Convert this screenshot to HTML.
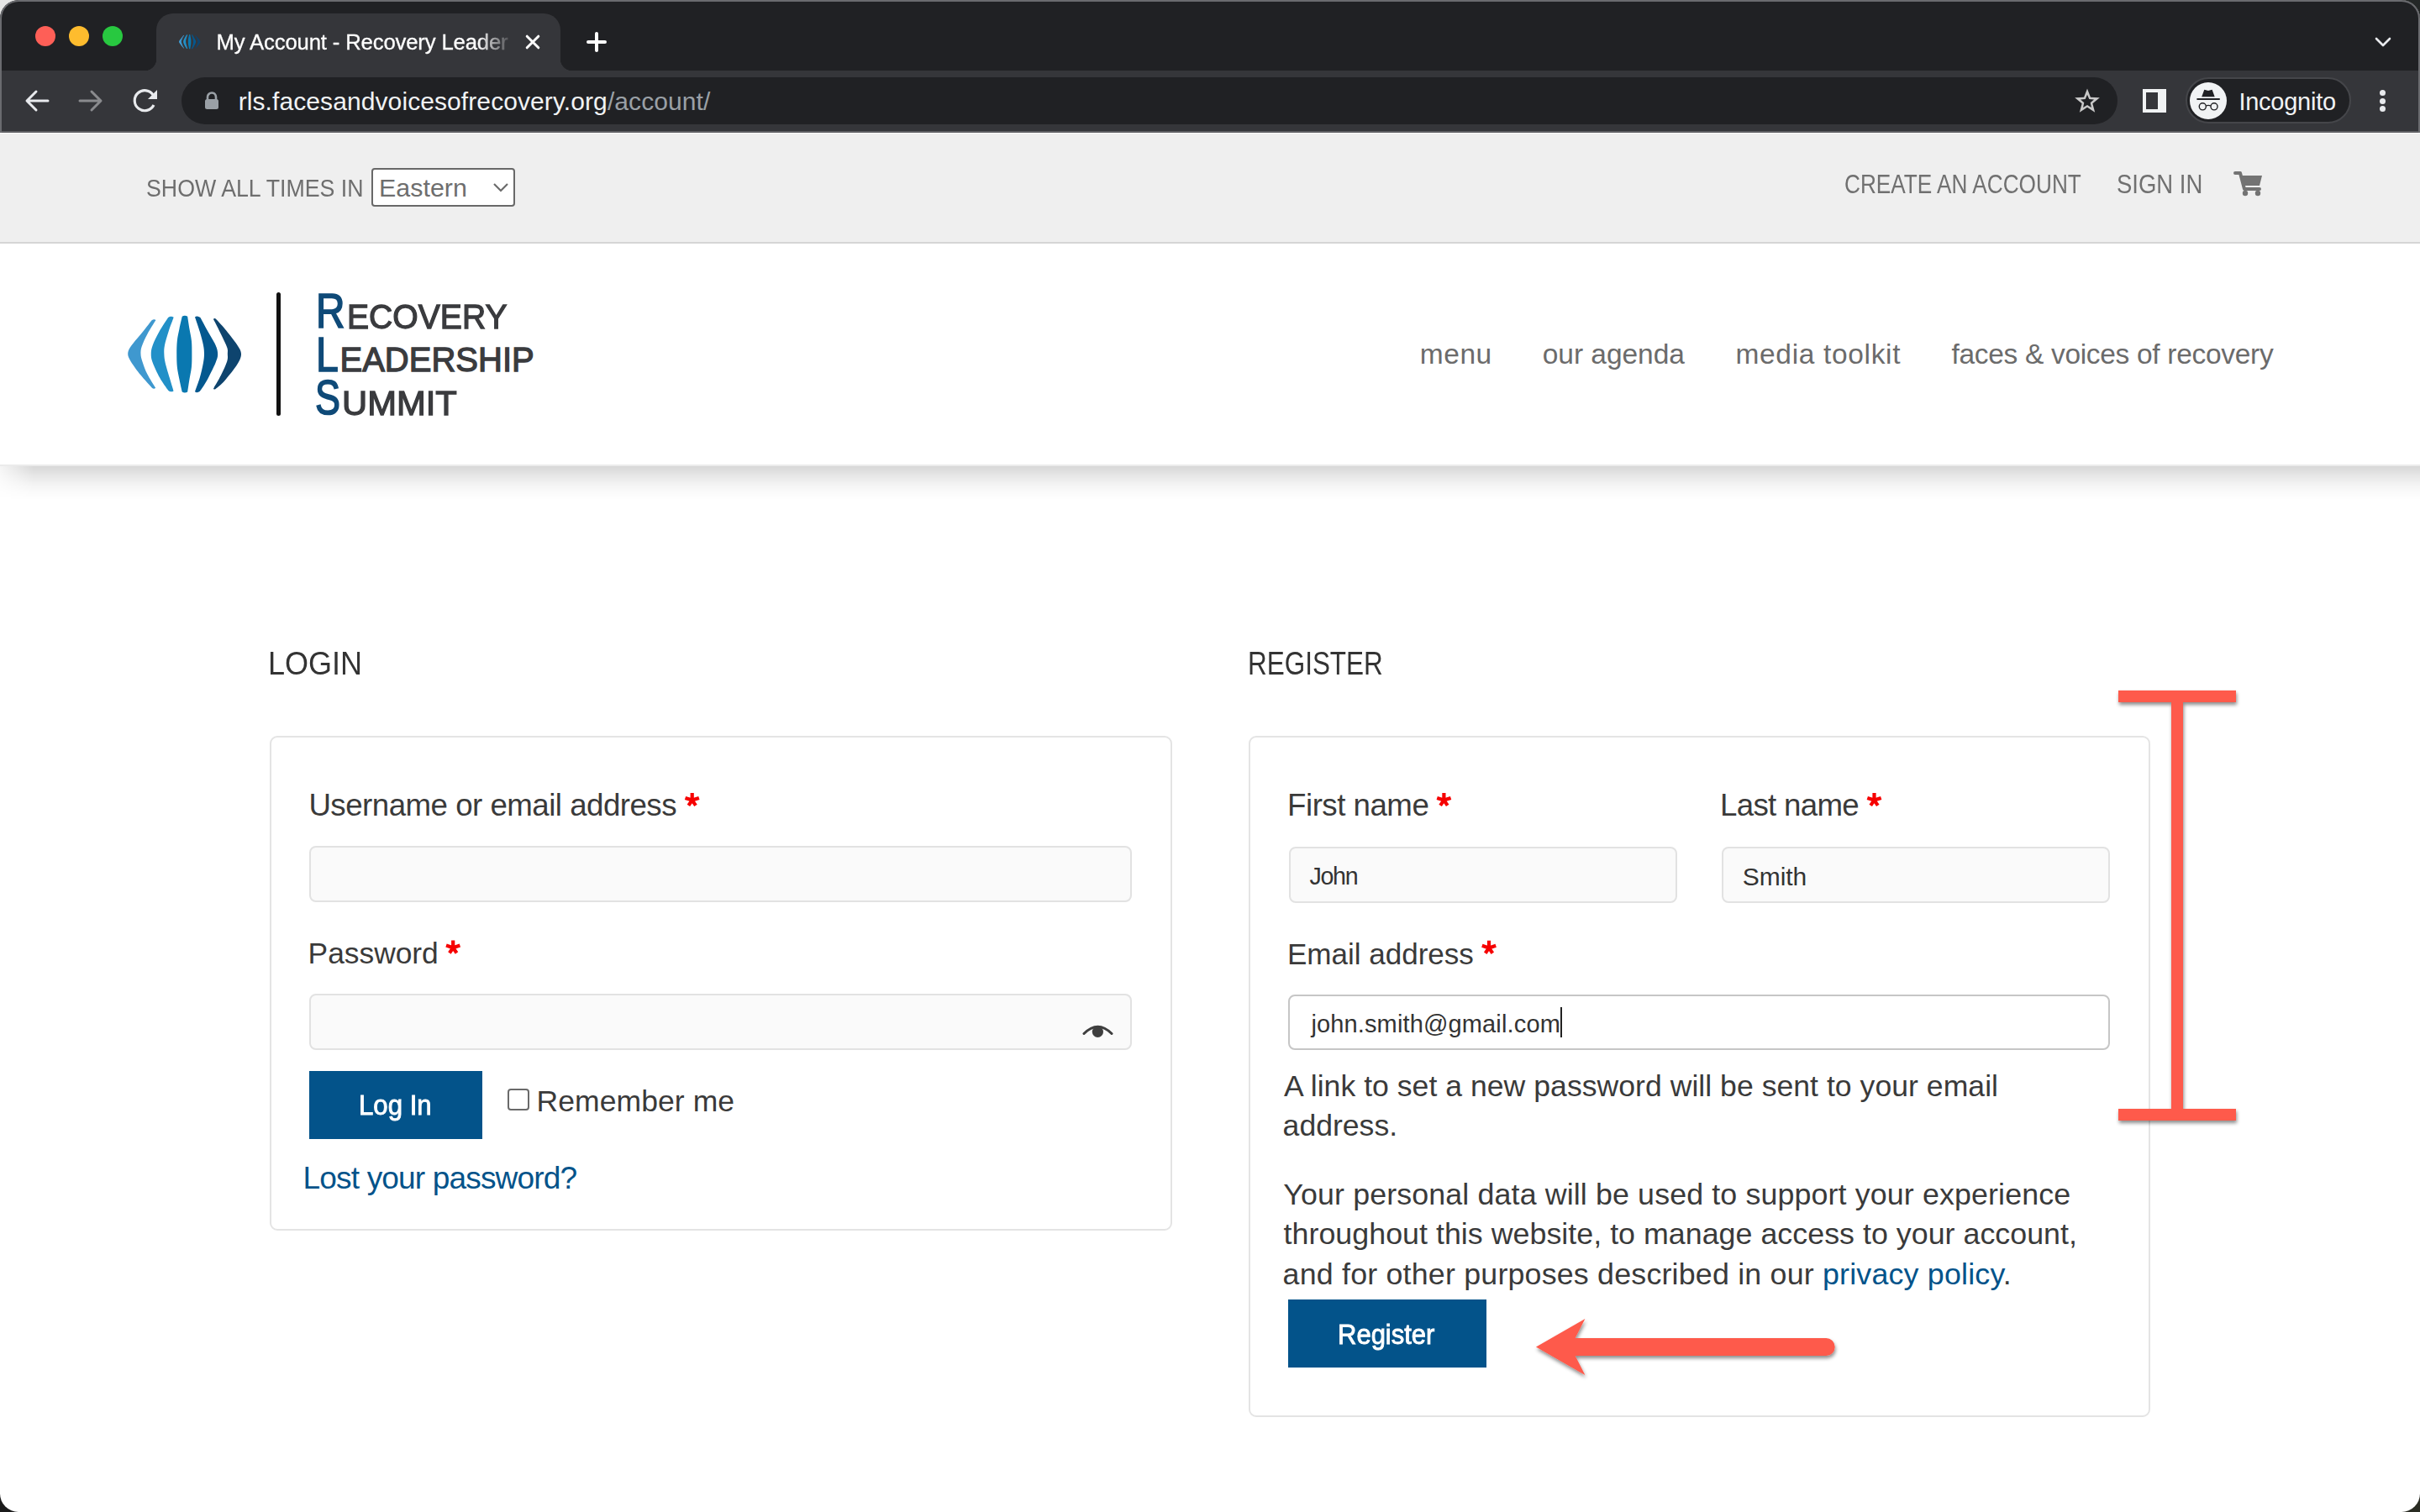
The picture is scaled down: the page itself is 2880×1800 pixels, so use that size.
<!DOCTYPE html>
<html><head><meta charset="utf-8"><title>My Account - Recovery Leadership Summit</title>
<style>
*{box-sizing:border-box;margin:0;padding:0}
html,body{width:2880px;height:1800px;overflow:hidden;background:#202124}
body{position:relative;font-family:"Liberation Sans",sans-serif}
.a{position:absolute}
.t{position:absolute;white-space:nowrap;line-height:1;font-family:"Liberation Sans",sans-serif}
#win{position:absolute;left:0;top:0;width:2880px;height:1800px;border-radius:22px;overflow:hidden;background:#fff}
</style></head>
<body>
<!-- outside corners -->
<div class="a" style="left:0;top:0;width:40px;height:40px;background:#e6e6e6"></div>
<div class="a" style="right:0;top:0;width:40px;height:40px;background:#242727"></div>
<div class="a" style="left:0;bottom:0;width:40px;height:40px;background:#1b1b1b"></div>
<div class="a" style="right:0;bottom:0;width:40px;height:40px;background:#2a2c23"></div>

<div id="win">
  <!-- ===== browser chrome ===== -->
  <div class="a" style="left:0;top:0;width:2880px;height:84px;background:#202124"></div>
  <div class="a" style="left:0;top:84px;width:2880px;height:72px;background:#35363a"></div>
  <div class="a" style="left:0;top:156px;width:2880px;height:2px;background:#5e5f63"></div>
  <div class="a" style="left:0;top:158px;width:2880px;height:1px;background:#fafafa"></div>
  <!-- window border -->
  <div class="a" style="left:0;top:0;width:2880px;height:158px;border:2px solid #6a6b6f;border-bottom:none;border-radius:22px 22px 0 0;pointer-events:none;z-index:5"></div>

  <!-- traffic lights -->
  <div class="a" style="left:42px;top:31px;width:24px;height:24px;border-radius:50%;background:#fe5f57"></div>
  <div class="a" style="left:82px;top:31px;width:24px;height:24px;border-radius:50%;background:#febc2e"></div>
  <div class="a" style="left:122px;top:31px;width:24px;height:24px;border-radius:50%;background:#28c840"></div>

  <!-- tab -->
  <div class="a" style="left:186px;top:16px;width:481px;height:68px;background:#35363a;border-radius:20px 20px 0 0"></div>
  <div class="a" style="left:172px;top:70px;width:14px;height:14px;background:radial-gradient(circle at 0 0,#202124 14px,#35363a 14.5px)"></div>
  <div class="a" style="left:667px;top:70px;width:14px;height:14px;background:radial-gradient(circle at 100% 0,#202124 14px,#35363a 14.5px)"></div>
  <!-- favicon -->
  <svg class="a" style="left:213px;top:41px" width="26" height="18" viewBox="100 150 1900 1300">
    <path fill="#3f98cf" d="M490,222 C460,260 366,382 309,453 C252,524 183,596 148,649 C113,702 99,732 99,774 C99,816 113,841 148,899 C183,957 252,1051 309,1122 C366,1193 460,1292 490,1326 Q525,1358 552,1330 C529,1292 452,1176 416,1104 C380,1032 354,954 336,899 C318,844 310,816 309,774 C308,732 309,702 327,649 C345,596 378,524 416,453 C454,382 533,259 556,220 Q530,195 490,222Z"/>
    <path fill="#2290c8" d="M758,178 C734,216 654,332 612,408 C570,484 527,570 505,631 C483,692 478,726 478,774 C478,822 481,852 505,917 C529,982 579,1090 621,1166 C663,1242 735,1338 758,1372 Q800,1410 846,1380 C835,1344 804,1243 781,1166 C758,1089 725,982 710,917 C695,852 694,822 692,774 C690,726 689,692 701,631 C713,570 740,484 764,408 C788,332 834,215 848,176 Q805,145 758,178Z"/>
    <path fill="#0a78b0" d="M986,162 C978,196 954,298 941,364 C928,430 912,492 905,560 C898,628 897,702 897,774 C897,846 898,921 905,990 C912,1059 928,1122 941,1190 C954,1258 978,1361 986,1395 Q1030,1425 1075,1395 C1080,1361 1095,1258 1106,1190 C1117,1122 1133,1059 1140,990 C1147,921 1146,846 1146,774 C1146,702 1147,628 1140,560 C1133,492 1117,430 1106,364 C1095,298 1080,196 1075,162 Q1030,135 986,162Z"/>
    <path fill="#04588f" d="M1284,178 C1305,216 1367,332 1409,408 C1451,484 1507,569 1534,631 C1561,693 1569,730 1569,778 C1569,826 1564,844 1534,916 C1504,988 1434,1132 1391,1210 C1348,1288 1297,1356 1278,1385 Q1230,1420 1196,1392 C1209,1354 1252,1245 1275,1166 C1298,1087 1321,982 1333,916 C1345,850 1347,820 1347,773 C1347,726 1345,692 1333,631 C1321,570 1298,484 1275,408 C1252,332 1209,211 1196,172 Q1230,140 1284,178Z"/>
    <path fill="#0e446e" d="M1546,210 C1569,236 1628,294 1685,364 C1742,434 1846,562 1890,631 C1934,700 1952,726 1952,778 C1952,830 1934,871 1890,943 C1846,1015 1742,1144 1685,1210 C1628,1276 1569,1317 1546,1338 Q1515,1370 1498,1342 C1519,1305 1586,1195 1623,1121 C1660,1047 1703,956 1721,898 C1739,840 1730,812 1730,773 C1730,734 1739,720 1721,667 C1703,614 1660,530 1623,453 C1586,376 1519,247 1498,206 Q1515,180 1546,210Z"/>
  </svg>
  <div class="a" style="left:250px;top:26px;width:362px;height:50px;overflow:hidden;-webkit-mask-image:linear-gradient(90deg,#000 318px,transparent 362px)">
    <div class="t" style="left:7.5px;top:11.5px;font-size:25.7px;letter-spacing:-0.15px;color:#ffffff;-webkit-text-stroke:0.3px #fff">My Account - Recovery Leader</div>
  </div>
  <!-- tab close -->
  <svg class="a" style="left:624px;top:40px" width="20" height="20" viewBox="0 0 20 20"><path d="M3.2,3.2 L16.8,16.8 M16.8,3.2 L3.2,16.8" stroke="#ffffff" stroke-width="3" stroke-linecap="round"/></svg>
  <!-- new tab plus -->
  <svg class="a" style="left:696px;top:36px" width="28" height="28" viewBox="0 0 28 28"><path d="M14,4 V24 M4,14 H24" stroke="#ffffff" stroke-width="4" stroke-linecap="round"/></svg>
  <!-- tab strip chevron -->
  <svg class="a" style="left:2825px;top:42px" width="22" height="16" viewBox="0 0 22 16"><path d="M3,4 L11,12 L19,4" fill="none" stroke="#e8eaed" stroke-width="2.6" stroke-linecap="round" stroke-linejoin="round"/></svg>

  <!-- nav icons -->
  <svg class="a" style="left:28px;top:104px" width="32" height="32" viewBox="0 0 32 32"><path d="M29,16 H5 M15,5 L4,16 L15,27" fill="none" stroke="#e8eaed" stroke-width="3" stroke-linecap="round" stroke-linejoin="round"/></svg>
  <svg class="a" style="left:92px;top:104px" width="32" height="32" viewBox="0 0 32 32"><path d="M3,16 H27 M17,5 L28,16 L17,27" fill="none" stroke="#8a8b8e" stroke-width="3" stroke-linecap="round" stroke-linejoin="round"/></svg>
  <svg class="a" style="left:156px;top:104px" width="34" height="32" viewBox="0 0 34 32"><path d="M27,21 A12,12 0 1 1 26.5,9.5" fill="none" stroke="#e8eaed" stroke-width="3.2"/><path d="M31,3 V14 H20 Z" fill="#e8eaed"/></svg>

  <!-- omnibox -->
  <div class="a" style="left:216px;top:92px;width:2304px;height:56px;border-radius:28px;background:#202124"></div>
  <svg class="a" style="left:242px;top:108px" width="20" height="24" viewBox="0 0 20 24"><path d="M5,11 V7.5 A5,5 0 0 1 15,7.5 V11" fill="none" stroke="#9aa0a6" stroke-width="2.6"/><rect x="2" y="10" width="16" height="12" rx="2.5" fill="#9aa0a6"/></svg>
  <div class="t" style="left:283.7px;top:105.5px;font-size:30px;letter-spacing:0.09px;color:#f1f3f4">rls.facesandvoicesofrecovery.org<span style="color:#9aa0a6">/account/</span></div>
  <svg class="a" style="left:2467px;top:104px" width="34" height="32" viewBox="0 0 34 32"><path fill-rule="evenodd" fill="#c9c9c9" d="M17.00,1.50 L20.94,11.68 L31.84,12.28 L23.37,19.17 L26.17,29.72 L17.00,23.80 L7.83,29.72 L10.63,19.17 L2.16,12.28 L13.06,11.68Z M17.00,8.70 L19.29,13.94 L24.99,14.50 L20.71,18.31 L21.94,23.90 L17.00,21.00 L12.06,23.90 L13.29,18.31 L9.01,14.50 L14.71,13.94Z"/></svg>

  <!-- side panel icon -->
  <div class="a" style="left:2550px;top:106px;width:28px;height:28px;background:#f1f3f4"></div>
  <div class="a" style="left:2554px;top:110px;width:14px;height:20px;background:#35363a"></div>
  <!-- incognito pill -->
  <div class="a" style="left:2601px;top:92px;width:197px;height:55px;border-radius:28px;background:#202124;border:2px solid #45464a"></div>
  <div class="a" style="left:2606px;top:98px;width:44px;height:44px;border-radius:50%;background:#f1f3f4"></div>
  <svg class="a" style="left:2606px;top:98px" width="44" height="44" viewBox="0 0 44 44">
    <path d="M14.2,17.3 L17.3,8.8 L22,9.9 L26.6,8.8 L29.7,17.3 Z" fill="#202124"/>
    <rect x="8.3" y="19.1" width="27.6" height="1.8" rx="0.6" fill="#202124"/>
    <circle cx="15.3" cy="28.8" r="4.05" fill="none" stroke="#202124" stroke-width="1.4"/>
    <circle cx="29" cy="28.8" r="4.05" fill="none" stroke="#202124" stroke-width="1.4"/>
    <path d="M19.4,28 Q22.1,26.6 24.9,28" fill="none" stroke="#202124" stroke-width="1.2"/>
  </svg>
  <div class="t" style="left:2664.4px;top:107.4px;font-size:29px;letter-spacing:-0.25px;color:#f1f3f4">Incognito</div>
  <!-- menu dots -->
  <div class="a" style="left:2832px;top:107px;width:7px;height:7px;border-radius:50%;background:#e8eaed"></div>
  <div class="a" style="left:2832px;top:116.5px;width:7px;height:7px;border-radius:50%;background:#e8eaed"></div>
  <div class="a" style="left:2832px;top:126px;width:7px;height:7px;border-radius:50%;background:#e8eaed"></div>

  <!-- ===== page ===== -->
  <div class="a" style="left:0;top:159px;width:2880px;height:129px;background:#efefef"></div>
  <div class="a" style="left:0;top:288px;width:2880px;height:2px;background:#d5d5d5"></div>

  <div class="t" style="left:173.9px;top:208.1px;font-size:30.4px;transform:scaleX(0.880);transform-origin:0 0;color:#6e6e6e">SHOW ALL TIMES IN</div>
  <div class="a" style="left:442px;top:200px;width:171px;height:46px;border:2px solid #686868;border-radius:4px;background:#fff"></div>
  <div class="t" style="left:451.1px;top:208.1px;font-size:30.4px;color:#6e6e6e">Eastern</div>
  <svg class="a" style="left:585px;top:215px" width="22" height="16" viewBox="0 0 22 16"><path d="M3,4 L11,12 L19,4" fill="none" stroke="#6b6b6b" stroke-width="2.2"/></svg>

  <div class="t" style="left:2194.7px;top:203.5px;font-size:30.6px;transform:scaleX(0.856);transform-origin:0 0;color:#707070">CREATE AN ACCOUNT</div>
  <div class="t" style="left:2518.5px;top:203.5px;font-size:30.6px;transform:scaleX(0.898);transform-origin:0 0;color:#707070">SIGN IN</div>
  <svg class="a" style="left:2658px;top:202px" width="36" height="32" viewBox="0 0 36 32">
    <path d="M2,4 H8 L13,23 H31" fill="none" stroke="#737373" stroke-width="4" stroke-linecap="round" stroke-linejoin="round"/>
    <path d="M9,7 H34 L31,19 H12 Z" fill="#737373"/>
    <circle cx="14" cy="28" r="3.2" fill="#737373"/><circle cx="29" cy="28" r="3.2" fill="#737373"/>
  </svg>

  <!-- header -->
  <div class="a" style="left:0;top:553px;width:2880px;height:2px;background:#ebebeb"></div>
  <div class="a" style="left:0;top:555px;width:2880px;height:40px;background:linear-gradient(180deg,rgba(0,0,0,.155) 0%,rgba(0,0,0,.10) 25%,rgba(0,0,0,.045) 55%,rgba(0,0,0,.015) 80%,rgba(0,0,0,0) 100%);-webkit-mask-image:linear-gradient(90deg,rgba(0,0,0,.25) 0,#000 40px)"></div>

  <!-- logo -->
  <svg class="a" style="left:145px;top:365px" width="150" height="110" viewBox="0 0 2062 1512">
    <path fill="#3f98cf" d="M490,222 C460,260 366,382 309,453 C252,524 183,596 148,649 C113,702 99,732 99,774 C99,816 113,841 148,899 C183,957 252,1051 309,1122 C366,1193 460,1292 490,1326 Q525,1358 552,1330 C529,1292 452,1176 416,1104 C380,1032 354,954 336,899 C318,844 310,816 309,774 C308,732 309,702 327,649 C345,596 378,524 416,453 C454,382 533,259 556,220 Q530,195 490,222Z"/>
    <path fill="#2290c8" d="M758,178 C734,216 654,332 612,408 C570,484 527,570 505,631 C483,692 478,726 478,774 C478,822 481,852 505,917 C529,982 579,1090 621,1166 C663,1242 735,1338 758,1372 Q800,1410 846,1380 C835,1344 804,1243 781,1166 C758,1089 725,982 710,917 C695,852 694,822 692,774 C690,726 689,692 701,631 C713,570 740,484 764,408 C788,332 834,215 848,176 Q805,145 758,178Z"/>
    <path fill="#0a78b0" d="M986,162 C978,196 954,298 941,364 C928,430 912,492 905,560 C898,628 897,702 897,774 C897,846 898,921 905,990 C912,1059 928,1122 941,1190 C954,1258 978,1361 986,1395 Q1030,1425 1075,1395 C1080,1361 1095,1258 1106,1190 C1117,1122 1133,1059 1140,990 C1147,921 1146,846 1146,774 C1146,702 1147,628 1140,560 C1133,492 1117,430 1106,364 C1095,298 1080,196 1075,162 Q1030,135 986,162Z"/>
    <path fill="#04588f" d="M1284,178 C1305,216 1367,332 1409,408 C1451,484 1507,569 1534,631 C1561,693 1569,730 1569,778 C1569,826 1564,844 1534,916 C1504,988 1434,1132 1391,1210 C1348,1288 1297,1356 1278,1385 Q1230,1420 1196,1392 C1209,1354 1252,1245 1275,1166 C1298,1087 1321,982 1333,916 C1345,850 1347,820 1347,773 C1347,726 1345,692 1333,631 C1321,570 1298,484 1275,408 C1252,332 1209,211 1196,172 Q1230,140 1284,178Z"/>
    <path fill="#0e446e" d="M1546,210 C1569,236 1628,294 1685,364 C1742,434 1846,562 1890,631 C1934,700 1952,726 1952,778 C1952,830 1934,871 1890,943 C1846,1015 1742,1144 1685,1210 C1628,1276 1569,1317 1546,1338 Q1515,1370 1498,1342 C1519,1305 1586,1195 1623,1121 C1660,1047 1703,956 1721,898 C1739,840 1730,812 1730,773 C1730,734 1739,720 1721,667 C1703,614 1660,530 1623,453 C1586,376 1519,247 1498,206 Q1515,180 1546,210Z"/>
  </svg>
  <div class="a" style="left:328.5px;top:348px;width:5px;height:147px;border-radius:2.5px;background:#111"></div>
  <div class="t" style="left:375.6px;top:342.0px;font-size:57px;color:#0f4a78;transform:scaleX(0.838);transform-origin:0 0;-webkit-text-stroke:1.7px #0f4a78">R</div>
  <div class="t" style="left:413.2px;top:356.5px;font-size:40px;color:#3a3b3e;transform:scaleX(0.978);transform-origin:0 0;-webkit-text-stroke:1.3px #3a3b3e">ECOVERY</div>
  <div class="t" style="left:375.6px;top:393.5px;font-size:57px;color:#0f4a78;transform:scaleX(0.845);transform-origin:0 0;-webkit-text-stroke:1.7px #0f4a78">L</div>
  <div class="t" style="left:404.5px;top:408.0px;font-size:40px;color:#3a3b3e;-webkit-text-stroke:1.3px #3a3b3e">EADERSHIP</div>
  <div class="t" style="left:374.7px;top:444.4px;font-size:58px;color:#0f4a78;transform:scaleX(0.774);transform-origin:0 0;-webkit-text-stroke:1.7px #0f4a78">S</div>
  <div class="t" style="left:407.1px;top:459.5px;font-size:40px;color:#3a3b3e;transform:scaleX(1.043);transform-origin:0 0;-webkit-text-stroke:1.3px #3a3b3e">UMMIT</div>

  <!-- nav -->
  <div class="t" style="left:1689.7px;top:405.4px;font-size:33.5px;letter-spacing:0.58px;color:#6b6b6b">menu</div>
  <div class="t" style="left:1835.7px;top:405.4px;font-size:33.5px;letter-spacing:-0.03px;color:#6b6b6b">our agenda</div>
  <div class="t" style="left:2065.5px;top:405.4px;font-size:33.5px;letter-spacing:0.66px;color:#6b6b6b">media toolkit</div>
  <div class="t" style="left:2322.4px;top:405.4px;font-size:33.5px;letter-spacing:-0.31px;color:#6b6b6b">faces &amp; voices of recovery</div>

  <!-- cards -->
  <div class="a" style="left:321px;top:876px;width:1074px;height:589px;border:2px solid #e4e4e4;border-radius:9px"></div>
  <div class="a" style="left:1486px;top:876px;width:1073px;height:811px;border:2px solid #e4e4e4;border-radius:9px"></div>
  <!-- inputs -->
  <div class="a" style="left:368px;top:1007px;width:979px;height:67px;border:2px solid #e2e2e2;border-radius:8px;background:#fafafa"></div>
  <div class="a" style="left:368px;top:1183px;width:979px;height:67px;border:2px solid #e2e2e2;border-radius:8px;background:#fafafa"></div>
  <div class="a" style="left:1534px;top:1008px;width:462px;height:67px;border:2px solid #e2e2e2;border-radius:8px;background:#fafafa"></div>
  <div class="a" style="left:2049px;top:1008px;width:462px;height:67px;border:2px solid #e2e2e2;border-radius:8px;background:#fafafa"></div>
  <div class="a" style="left:1533px;top:1184px;width:978px;height:66px;border:2px solid #c6c6c6;border-radius:8px;background:#ffffff"></div>
  <!-- eye -->
  <svg class="a" style="left:1285px;top:1215px" width="42" height="24" viewBox="1285 1215 42 24">
    <path d="M1290,1230.5 Q1306.5,1214 1323,1230.5" fill="none" stroke="#3f3f3f" stroke-width="3" stroke-linecap="round"/>
    <circle cx="1306.4" cy="1228.3" r="6.6" fill="#3f3f3f"/>
  </svg>
  <!-- buttons -->
  <div class="a" style="left:368px;top:1275px;width:206px;height:81px;background:#03538a"></div>
  <div class="a" style="left:1533px;top:1547px;width:236px;height:81px;background:#03538a"></div>
  <!-- checkbox -->
  <div class="a" style="left:604px;top:1296px;width:26px;height:26px;border:2px solid #6a6a6a;border-radius:4px;background:#fff"></div>
  <!-- cursor -->
  <div class="a" style="left:1857px;top:1199px;width:2px;height:36px;background:#222"></div>
  <!-- asterisks -->
  <svg width="0" height="0" style="position:absolute"><defs><g id="ast"><path d="M0,0 V-8.6 M0,0 L8.2,-2.7 M0,0 L4.3,6.3 M0,0 L-4.3,6.3 M0,0 L-8.2,-2.7" stroke="#f60000" stroke-width="4.2"/></g></defs></svg>
  <svg class="a" style="left:0;top:0;overflow:visible" width="1" height="1">
    <use href="#ast" x="823.7" y="952.6"/>
    <use href="#ast" x="539.2" y="1128.2"/>
    <use href="#ast" x="1718.4" y="952.6"/>
    <use href="#ast" x="2230.5" y="952.6"/>
    <use href="#ast" x="1772" y="1128.4"/>
  </svg>
  <!-- annotations -->
  <svg class="a" style="left:0;top:0;overflow:visible" width="1" height="1">
    <defs><filter id="sh" x="-20%" y="-20%" width="140%" height="140%"><feDropShadow dx="1" dy="3" stdDeviation="2.2" flood-color="#000" flood-opacity="0.45"/></filter></defs>
    <path filter="url(#sh)" fill="#fe5a4b" d="M2521,822 H2661 V836 H2598 V1320 H2661 V1334 H2521 V1320 H2584 V836 H2521 Z"/>
    <path filter="url(#sh)" fill="#fe5a4b" d="M1828,1603.5 L1886.4,1570 L1874.6,1593 H2173.2 A10.5,10.5 0 0 1 2173.2,1614 H1874.6 L1886.4,1637 Z"/>
  </svg>

  <!-- texts -->
  <div class="t" style="left:318.9px;top:770.9px;font-size:38.4px;color:#333333;transform:scaleX(0.9380);transform-origin:0 0">LOGIN</div>
  <div class="t" style="left:1484.5px;top:770.8px;font-size:38.6px;color:#333333;transform:scaleX(0.8152);transform-origin:0 0">REGISTER</div>
  <div class="t" style="left:367.4px;top:941.1px;font-size:36.7px;color:#3a3a3a;letter-spacing:-0.52px">Username or email address</div>
  <div class="t" style="left:366.6px;top:1117.6px;font-size:35.4px;color:#3a3a3a;letter-spacing:-0.03px">Password</div>
  <div class="t" style="left:427.2px;top:1300.0px;font-size:32.5px;color:#ffffff;-webkit-text-stroke:0.9px #fff;transform:scaleX(0.9593);transform-origin:0 0">Log In</div>
  <div class="t" style="left:638.5px;top:1293.9px;font-size:35.5px;color:#3a3a3a;letter-spacing:0.08px">Remember me</div>
  <div class="t" style="left:360.6px;top:1383.8px;font-size:37.1px;color:#03538a;letter-spacing:-0.87px">Lost your password?</div>
  <div class="t" style="left:1532.1px;top:941.3px;font-size:36.7px;color:#3a3a3a;letter-spacing:-0.51px">First name</div>
  <div class="t" style="left:2047.1px;top:941.3px;font-size:36.7px;color:#3a3a3a;letter-spacing:-0.71px">Last name</div>
  <div class="t" style="left:1558.6px;top:1029.1px;font-size:28.6px;color:#333333;letter-spacing:-1.34px">John</div>
  <div class="t" style="left:2073.8px;top:1028.5px;font-size:30.0px;color:#333333;letter-spacing:-0.07px">Smith</div>
  <div class="t" style="left:1531.9px;top:1117.9px;font-size:35.1px;color:#3a3a3a;letter-spacing:-0.02px">Email address</div>
  <div class="t" style="left:1560.4px;top:1204.7px;font-size:29.0px;color:#333333;letter-spacing:0.14px">john.smith@gmail.com</div>
  <div class="t" style="left:1528.0px;top:1276.0px;font-size:35.6px;color:#3a3a3a;letter-spacing:0.03px">A link to set a new password will be sent to your email</div>
  <div class="t" style="left:1526.6px;top:1323.1px;font-size:35.6px;color:#3a3a3a">address.</div>
  <div class="t" style="left:1527.3px;top:1404.9px;font-size:35.8px;color:#3a3a3a;letter-spacing:0.12px">Your personal data will be used to support your experience</div>
  <div class="t" style="left:1527.6px;top:1452.3px;font-size:35.8px;color:#3a3a3a;letter-spacing:0.02px">throughout this website, to manage access to your account,</div>
  <div class="t" style="left:1526.6px;top:1499.9px;font-size:35.8px;color:#3a3a3a;letter-spacing:0.19px">and for other purposes described in our <span style="color:#03538a">privacy policy</span>.</div>
  <div class="t" style="left:1591.9px;top:1572.3px;font-size:33.0px;color:#ffffff;-webkit-text-stroke:0.9px #fff;transform:scaleX(0.9394);transform-origin:0 0">Register</div>

</div>
</body></html>
